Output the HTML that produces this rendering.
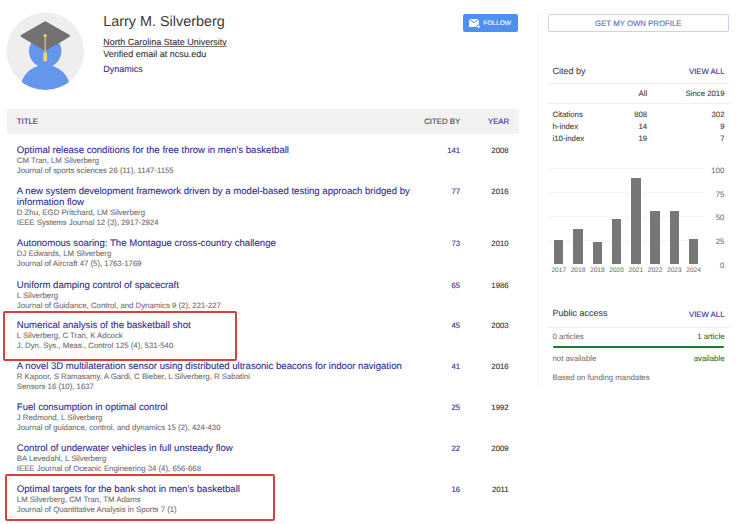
<!DOCTYPE html>
<html><head><meta charset="utf-8"><style>
html,body{margin:0;padding:0;background:#fff;}
body{width:750px;height:524px;position:relative;overflow:hidden;font-family:"Liberation Sans",sans-serif;}
.t{position:absolute;white-space:nowrap;line-height:1;text-rendering:geometricPrecision;-webkit-text-stroke:0.1px currentColor;}
</style></head><body>
<svg style="position:absolute;left:0;top:0" width="100" height="100" viewBox="0 0 100 100">
<defs><clipPath id="cc"><circle cx="45.3" cy="51.3" r="38.7"/></clipPath></defs>
<circle cx="45.3" cy="51.3" r="38.7" fill="#eeeeee"/>
<g clip-path="url(#cc)">
<circle cx="45.2" cy="51.2" r="16.2" fill="#6497ec"/>
<circle cx="45.3" cy="89.8" r="25" fill="#6497ec"/>
</g>
<path d="M45.3 22.6 L68.6 36.0 L45.3 49.6 L22.0 36.0 Z" fill="#727272" stroke="#727272" stroke-width="2.6" stroke-linejoin="round"/>
<line x1="45.2" y1="35.6" x2="45.2" y2="55" stroke="#f3d36b" stroke-width="1.1"/>
<circle cx="45.2" cy="35.6" r="1.6" fill="#f3d36b"/>
<rect x="43.4" y="52.8" width="3.6" height="8.6" rx="1.3" fill="#f3d36b"/>
</svg>
<div class="t" style="left:103.20px;top:15px;font-size:14.4px;color:#3a3a3a;-webkit-text-stroke:0;">Larry M. Silverberg</div>
<div class="t" style="left:103.20px;top:38px;font-size:9px;color:#333;text-decoration:underline;text-decoration-color:#777;text-underline-offset:1.2px;">North Carolina State University</div>
<div class="t" style="left:103.20px;top:50px;font-size:9px;color:#333;">Verified email at ncsu.edu</div>
<div class="t" style="left:103.20px;top:65px;font-size:9px;color:#332d94;">Dynamics</div>
<div style="position:absolute;left:463px;top:14.3px;width:55px;height:17.5px;background:#4d8ff2;border-radius:2px"></div>
<svg style="position:absolute;left:467px;top:17px" width="14" height="12" viewBox="0 0 14 12">
<path d="M2 2 H12 V10 H2 Z" fill="#fff"/>
<path d="M2 2.3 L7 5.6 L12 2.3" fill="none" stroke="#4d8ff2" stroke-width="1"/>
<circle cx="11.6" cy="9.7" r="2.2" fill="#4d8ff2"/>
<path d="M11.6 8.2 V11.2 M10.1 9.7 H13.1" stroke="#fff" stroke-width="1"/>
</svg>
<div class="t" style="left:483.20px;top:21px;font-size:6.6px;color:#fff;">FOLLOW</div>
<div style="position:absolute;left:538px;top:12px;width:1px;height:376px;background:#f5f5f5"></div>
<div style="position:absolute;left:547.5px;top:14.3px;width:181px;height:17.4px;box-sizing:border-box;border:1px solid #c9d3ec;border-radius:2px"></div>
<div class="t" style="left:438.30px;width:400px;text-align:center;top:20px;font-size:7.8px;color:#4a6cc9;">GET MY OWN PROFILE</div>
<div class="t" style="left:552.50px;top:67px;font-size:9px;color:#444;">Cited by</div>
<div class="t" style="right:25.50px;top:68px;font-size:7.8px;color:#332d94;">VIEW ALL</div>
<div style="position:absolute;left:547.5px;top:83px;width:182px;height:1px;background:#efefef"></div>
<div class="t" style="right:102.80px;top:90px;font-size:7.8px;color:#444;">All</div>
<div class="t" style="right:25.50px;top:90px;font-size:7.8px;color:#444;">Since 2019</div>
<div style="position:absolute;left:547.5px;top:103px;width:182px;height:1px;background:#efefef"></div>
<div class="t" style="left:552.50px;top:111px;font-size:7.8px;color:#444;">Citations</div>
<div class="t" style="right:102.80px;top:111px;font-size:7.8px;color:#444;">808</div>
<div class="t" style="right:25.50px;top:111px;font-size:7.8px;color:#444;">302</div>
<div class="t" style="left:552.50px;top:123px;font-size:7.8px;color:#444;">h-index</div>
<div class="t" style="right:102.80px;top:123px;font-size:7.8px;color:#444;">14</div>
<div class="t" style="right:25.50px;top:123px;font-size:7.8px;color:#444;">9</div>
<div class="t" style="left:552.50px;top:135px;font-size:7.8px;color:#444;">i10-index</div>
<div class="t" style="right:102.80px;top:135px;font-size:7.8px;color:#444;">19</div>
<div class="t" style="right:25.50px;top:135px;font-size:7.8px;color:#444;">7</div>
<div style="position:absolute;left:548px;top:167.6px;width:155px;height:1px;background:#f6f6f6"></div>
<div style="position:absolute;left:548px;top:192.0px;width:155px;height:1px;background:#f6f6f6"></div>
<div style="position:absolute;left:548px;top:216.1px;width:155px;height:1px;background:#f6f6f6"></div>
<div style="position:absolute;left:548px;top:239.9px;width:155px;height:1px;background:#f6f6f6"></div>
<div style="position:absolute;left:554.10px;top:239.96px;width:9.4px;height:24.34px;background:#777"></div>
<div class="t" style="left:358.80px;width:400px;text-align:center;top:268px;font-size:6.6px;color:#777;">2017</div>
<div style="position:absolute;left:573.36px;top:228.51px;width:9.4px;height:35.79px;background:#777"></div>
<div class="t" style="left:378.06px;width:400px;text-align:center;top:268px;font-size:6.6px;color:#777;">2018</div>
<div style="position:absolute;left:592.62px;top:241.89px;width:9.4px;height:22.41px;background:#777"></div>
<div class="t" style="left:397.32px;width:400px;text-align:center;top:268px;font-size:6.6px;color:#777;">2019</div>
<div style="position:absolute;left:611.88px;top:219.37px;width:9.4px;height:44.93px;background:#777"></div>
<div class="t" style="left:416.58px;width:400px;text-align:center;top:268px;font-size:6.6px;color:#777;">2020</div>
<div style="position:absolute;left:631.14px;top:177.72px;width:9.4px;height:86.58px;background:#777"></div>
<div class="t" style="left:435.84px;width:400px;text-align:center;top:268px;font-size:6.6px;color:#777;">2021</div>
<div style="position:absolute;left:650.40px;top:211.39px;width:9.4px;height:52.91px;background:#777"></div>
<div class="t" style="left:455.10px;width:400px;text-align:center;top:268px;font-size:6.6px;color:#777;">2022</div>
<div style="position:absolute;left:669.66px;top:211.39px;width:9.4px;height:52.91px;background:#777"></div>
<div class="t" style="left:474.36px;width:400px;text-align:center;top:268px;font-size:6.6px;color:#777;">2023</div>
<div style="position:absolute;left:688.92px;top:239.00px;width:9.4px;height:25.30px;background:#777"></div>
<div class="t" style="left:493.62px;width:400px;text-align:center;top:268px;font-size:6.6px;color:#777;">2024</div>
<div class="t" style="right:25.70px;top:167px;font-size:7.8px;color:#777;">100</div>
<div class="t" style="right:25.70px;top:191px;font-size:7.8px;color:#777;">75</div>
<div class="t" style="right:25.70px;top:214px;font-size:7.8px;color:#777;">50</div>
<div class="t" style="right:25.70px;top:238px;font-size:7.8px;color:#777;">25</div>
<div class="t" style="right:25.70px;top:262px;font-size:7.8px;color:#777;">0</div>
<div class="t" style="left:552.50px;top:309px;font-size:9px;color:#444;">Public access</div>
<div class="t" style="right:25.50px;top:311px;font-size:7.8px;color:#332d94;">VIEW ALL</div>
<div style="position:absolute;left:547.5px;top:326.5px;width:182px;height:1px;background:#efefef"></div>
<div class="t" style="left:552.50px;top:333px;font-size:7.8px;color:#7a7a7a;">0 articles</div>
<div class="t" style="right:25.50px;top:333px;font-size:7.8px;color:#1e7b34;">1 article</div>
<div style="position:absolute;left:552.5px;top:345.7px;width:171.5px;height:2.5px;background:#1e7b34;border-radius:1.2px"></div>
<div class="t" style="left:552.50px;top:355px;font-size:7.8px;color:#7a7a7a;">not available</div>
<div class="t" style="right:25.50px;top:355px;font-size:7.8px;color:#1e7b34;">available</div>
<div class="t" style="left:552.50px;top:374px;font-size:7.8px;color:#7a7a7a;">Based on funding mandates</div>
<div style="position:absolute;left:7px;top:108.8px;width:511.7px;height:25px;background:#f2f2f2"></div>
<div class="t" style="left:16.80px;top:118px;font-size:7.8px;color:#332d94;">TITLE</div>
<div class="t" style="right:289.80px;top:118px;font-size:7.8px;color:#444;">CITED BY</div>
<div class="t" style="right:240.80px;top:118px;font-size:7.8px;color:#332d94;">YEAR</div>
<div class="t" style="left:16.80px;top:146px;font-size:9.6px;color:#332d94;">Optimal release conditions for the free throw in men&#39;s basketball</div>
<div class="t" style="left:16.80px;top:157px;font-size:7.8px;color:#707070;">CM Tran, LM Silverberg</div>
<div class="t" style="left:16.80px;top:167px;font-size:7.8px;color:#707070;">Journal of sports sciences 26 (11), 1147-1155</div>
<div class="t" style="right:289.80px;top:147px;font-size:7.8px;color:#332d94;">141</div>
<div class="t" style="right:241.30px;top:147px;font-size:7.8px;color:#333;">2008</div>
<div class="t" style="left:16.80px;top:187px;font-size:9.6px;color:#332d94;">A new system development framework driven by a model-based testing approach bridged by</div>
<div class="t" style="left:16.80px;top:198px;font-size:9.6px;color:#332d94;">information flow</div>
<div class="t" style="left:16.80px;top:209px;font-size:7.8px;color:#707070;">D Zhu, EGD Pritchard, LM Silverberg</div>
<div class="t" style="left:16.80px;top:219px;font-size:7.8px;color:#707070;">IEEE Systems Journal 12 (3), 2917-2924</div>
<div class="t" style="right:289.80px;top:188px;font-size:7.8px;color:#332d94;">77</div>
<div class="t" style="right:241.30px;top:188px;font-size:7.8px;color:#333;">2016</div>
<div class="t" style="left:16.80px;top:239px;font-size:9.6px;color:#332d94;">Autonomous soaring: The Montague cross-country challenge</div>
<div class="t" style="left:16.80px;top:250px;font-size:7.8px;color:#707070;">DJ Edwards, LM Silverberg</div>
<div class="t" style="left:16.80px;top:260px;font-size:7.8px;color:#707070;">Journal of Aircraft 47 (5), 1763-1769</div>
<div class="t" style="right:289.80px;top:240px;font-size:7.8px;color:#332d94;">73</div>
<div class="t" style="right:241.30px;top:240px;font-size:7.8px;color:#333;">2010</div>
<div class="t" style="left:16.80px;top:281px;font-size:9.6px;color:#332d94;">Uniform damping control of spacecraft</div>
<div class="t" style="left:16.80px;top:292px;font-size:7.8px;color:#707070;">L Silverberg</div>
<div class="t" style="left:16.80px;top:302px;font-size:7.8px;color:#707070;">Journal of Guidance, Control, and Dynamics 9 (2), 221-227</div>
<div class="t" style="right:289.80px;top:282px;font-size:7.8px;color:#332d94;">65</div>
<div class="t" style="right:241.30px;top:282px;font-size:7.8px;color:#333;">1986</div>
<div class="t" style="left:16.80px;top:321px;font-size:9.6px;color:#332d94;">Numerical analysis of the basketball shot</div>
<div class="t" style="left:16.80px;top:332px;font-size:7.8px;color:#707070;">L Silverberg, C Tran, K Adcock</div>
<div class="t" style="left:16.80px;top:342px;font-size:7.8px;color:#707070;">J. Dyn. Sys., Meas., Control 125 (4), 531-540</div>
<div class="t" style="right:289.80px;top:322px;font-size:7.8px;color:#332d94;">45</div>
<div class="t" style="right:241.30px;top:322px;font-size:7.8px;color:#333;">2003</div>
<div class="t" style="left:16.80px;top:362px;font-size:9.6px;color:#332d94;">A novel 3D multilateration sensor using distributed ultrasonic beacons for indoor navigation</div>
<div class="t" style="left:16.80px;top:373px;font-size:7.8px;color:#707070;">R Kapoor, S Ramasamy, A Gardi, C Bieber, L Silverberg, R Sabatini</div>
<div class="t" style="left:16.80px;top:383px;font-size:7.8px;color:#707070;">Sensors 16 (10), 1637</div>
<div class="t" style="right:289.80px;top:363px;font-size:7.8px;color:#332d94;">41</div>
<div class="t" style="right:241.30px;top:363px;font-size:7.8px;color:#333;">2016</div>
<div class="t" style="left:16.80px;top:403px;font-size:9.6px;color:#332d94;">Fuel consumption in optimal control</div>
<div class="t" style="left:16.80px;top:414px;font-size:7.8px;color:#707070;">J Redmond, L Silverberg</div>
<div class="t" style="left:16.80px;top:424px;font-size:7.8px;color:#707070;">Journal of guidance, control, and dynamics 15 (2), 424-430</div>
<div class="t" style="right:289.80px;top:404px;font-size:7.8px;color:#332d94;">25</div>
<div class="t" style="right:241.30px;top:404px;font-size:7.8px;color:#333;">1992</div>
<div class="t" style="left:16.80px;top:444px;font-size:9.6px;color:#332d94;">Control of underwater vehicles in full unsteady flow</div>
<div class="t" style="left:16.80px;top:455px;font-size:7.8px;color:#707070;">BA Levedahl, L Silverberg</div>
<div class="t" style="left:16.80px;top:465px;font-size:7.8px;color:#707070;">IEEE Journal of Oceanic Engineering 34 (4), 656-668</div>
<div class="t" style="right:289.80px;top:445px;font-size:7.8px;color:#332d94;">22</div>
<div class="t" style="right:241.30px;top:445px;font-size:7.8px;color:#333;">2009</div>
<div class="t" style="left:16.80px;top:485px;font-size:9.6px;color:#332d94;">Optimal targets for the bank shot in men&#39;s basketball</div>
<div class="t" style="left:16.80px;top:496px;font-size:7.8px;color:#707070;">LM Silverberg, CM Tran, TM Adams</div>
<div class="t" style="left:16.80px;top:506px;font-size:7.8px;color:#707070;">Journal of Quantitative Analysis in Sports 7 (1)</div>
<div class="t" style="right:289.80px;top:486px;font-size:7.8px;color:#332d94;">16</div>
<div class="t" style="right:241.30px;top:486px;font-size:7.8px;color:#333;">2011</div>
<div style="position:absolute;left:2.5px;top:311.3px;width:234.3px;height:49.8px;box-sizing:border-box;border:2.3px solid #d8403a;border-radius:2px"></div>
<div style="position:absolute;left:5px;top:473.8px;width:269.8px;height:47px;box-sizing:border-box;border:2.4px solid #d8403a;border-radius:2px"></div>
</body></html>
